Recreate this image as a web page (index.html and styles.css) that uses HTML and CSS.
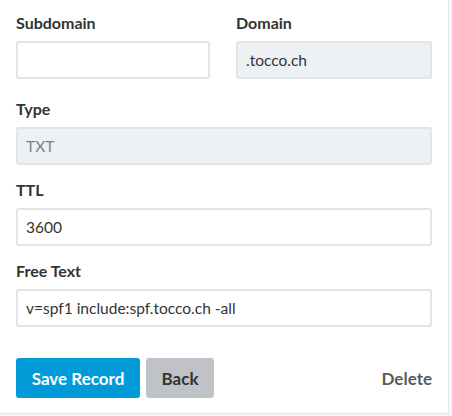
FILE: index.html
```html
<!DOCTYPE html>
<html lang="en">
<head>
<meta charset="utf-8">
<title>Edit Record</title>
<link rel="stylesheet" href="styles.css">
</head>
<body>
<div class="card">
  <div class="row">
    <div class="group">
      <label class="label">Subdomain</label>
      <div class="input"></div>
    </div>
    <div class="group">
      <label class="label">Domain</label>
      <div class="input disabled">.tocco.ch</div>
    </div>
  </div>
  <div class="group">
    <label class="label">Type</label>
    <div class="input disabled muted">TXT</div>
  </div>
  <div class="group">
    <label class="label">TTL</label>
    <div class="input">3600</div>
  </div>
  <div class="group">
    <label class="label">Free Text</label>
    <div class="input">v=spf1 include:spf.tocco.ch -all</div>
  </div>
  <div class="actions">
    <button class="btn primary">Save Record</button>
    <button class="btn secondary">Back</button>
    <span class="spacer"></span>
    <button class="link">Delete</button>
  </div>
</div>
</body>
</html>
```
FILE: styles.css
```css
* { box-sizing: border-box; }
html, body { margin: 0; padding: 0; }
body {
  background: #f3f5f7;
  font-family: Lato, "Open Sans", sans-serif;
  color: #333;
  width: 452px;
  height: 416px;
  overflow: hidden;
}
.card {
  width: 449px;
  height: 414px;
  background: #fff;
  border-right: 1px solid #e2e6ea;
  border-bottom: 1px solid #e2e6ea;
  padding: 13px 16px 0 16px;
  display: flex;
  flex-direction: column;
}
.row {
  display: grid;
  grid-template-columns: 194px 196px;
  column-gap: 26px;
  margin-bottom: 20px;
}
.group {
  display: flex;
  flex-direction: column;
  margin-bottom: 15px;
}
.row .group { margin-bottom: 0; }
.label {
  font-size: 16px;
  font-weight: 700;
  line-height: 20px;
  margin-bottom: 8px;
  color: #333;
}
.input {
  height: 38px;
  border: 2px solid #e1e5ea;
  border-radius: 3px;
  background: #fff;
  font-size: 15.5px;
  line-height: 35px;
  padding: 0 8px;
  color: #333;
  width: 416px;
}
.row .input { width: auto; }
.input.disabled { background: #eef1f4; }
.input.muted { color: #7b7f83; }
.actions {
  display: flex;
  align-items: center;
  gap: 6px;
  margin-top: 16px;
  width: 416px;
}
.spacer { flex: 1; }
.btn {
  height: 40px;
  border: none;
  border-radius: 3px;
  font-family: Lato, sans-serif;
  font-size: 17px;
  font-weight: 700;
  padding: 0;
}
.primary { background: #009bd7; color: #fff; width: 124px; }
.secondary { background: #bfc3c7; color: #333; width: 68px; }
.link {
  border: none;
  background: none;
  padding: 0;
  font-family: Lato, sans-serif;
  font-size: 17px;
  font-weight: 700;
  color: #585d63;
}
```
